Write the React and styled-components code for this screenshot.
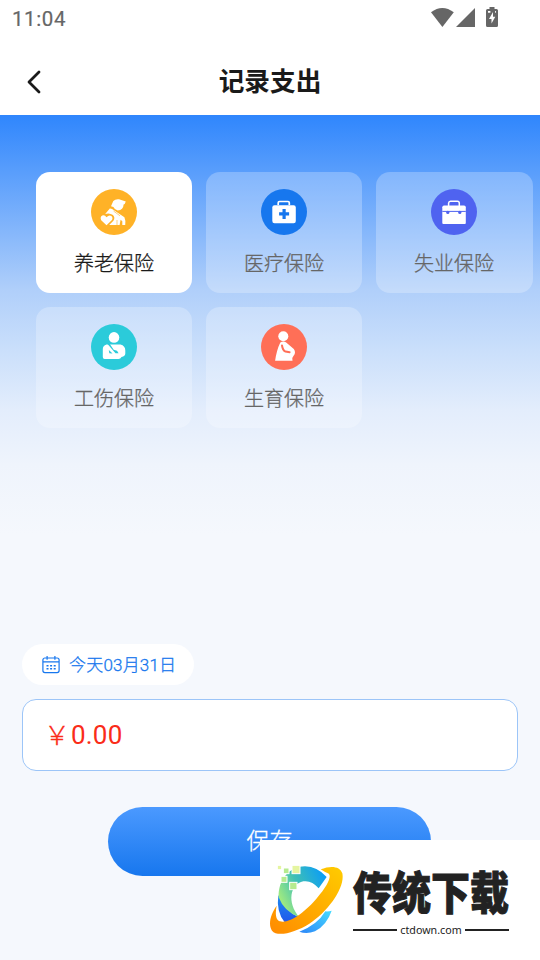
import React, { useState } from 'react';
import styled, { createGlobalStyle, css } from 'styled-components';

const fontStack = "Roboto, 'Noto Sans CJK SC', sans-serif";

const colors = {
	ink: '#1a1a1a',
	grey: '#666666',
	blue: '#1777ee',
	red: '#fa2c19',
	page: '#f5f8fd',
};

// sits between the light and regular cuts
const demiLight = css`
	font-family: 'Noto Sans CJK SC Light', 'Noto Sans CJK SC', sans-serif;
	font-weight: 350;
	-webkit-text-stroke: 0.3px currentColor;
`;

const insurances = [
	{ id: 'pension', label: '养老保险', color: '#ffb227', Icon: PensionIcon },
	{ id: 'medical', label: '医疗保险', color: '#1777ee', Icon: MedicalIcon },
	{ id: 'unemployment', label: '失业保险', color: '#4f63f0', Icon: BriefcaseIcon },
	{ id: 'injury', label: '工伤保险', color: '#2bcbda', Icon: InjuryIcon },
	{ id: 'maternity', label: '生育保险', color: '#ff6f57', Icon: MaternityIcon },
];

export default function App() {
	const [selected, setSelected] = useState('pension');

	return (
		<Screen>
			<GlobalStyle />
			<StatusBar>
				<Clock>11:04</Clock>
				<StatusIcons />
			</StatusBar>
			<Header>
				<BackButton aria-label="返回">
					<svg width="16" height="26" viewBox="0 0 16 26">
						<path
							d="M13 3 L3 13 L13 23"
							fill="none"
							stroke={colors.ink}
							strokeWidth="2.8"
							strokeLinecap="round"
							strokeLinejoin="round"
						/>
					</svg>
				</BackButton>
				<Title>记录支出</Title>
			</Header>
			<Content>
				<InsuranceGrid>
					{insurances.map(({ id, label, color, Icon }) => (
						<Tile key={id} $active={id === selected} onClick={() => setSelected(id)}>
							<svg width="46" height="46" viewBox="0 0 46 46">
								<circle cx="23" cy="23" r="23" fill={color} />
								<Icon color={color} />
							</svg>
							<TileLabel>{label}</TileLabel>
						</Tile>
					))}
				</InsuranceGrid>
				<Form>
					<DatePill>
						<CalendarIcon />
						<DateText>今天03月31日</DateText>
					</DatePill>
					<AmountBox>
						<Yen>￥</Yen>0.00
					</AmountBox>
					<SaveButton>保存</SaveButton>
				</Form>
			</Content>
			<Watermark>
				<LogoMark />
				<Brand>
					<BrandName>传统下载</BrandName>
					<BrandSite>ctdown.com</BrandSite>
				</Brand>
			</Watermark>
		</Screen>
	);
}

function StatusIcons() {
	return (
		<svg width="68" height="22" viewBox="431 6 68 22" fill="#666666">
			<path d="M431 12.3 Q442.3 3.8 453.8 12.3 L442.4 27 Z" />
			<path d="M475 8 V27 H456 Z" />
			<path d="M489.5 7 h5 v2 h2 q1.5 0 1.5 1.5 v15 q0 1.5 -1.5 1.5 h-9 q-1.5 0 -1.5 -1.5 v-15 q0 -1.5 1.5 -1.5 h2 Z" />
			<path d="M493 12 L489 19 H491.5 V23.6 L495.3 16.8 H493 Z" fill="#fff" />
			<path d="M488 11 h2.4 v1.8 H488 Z M495 11 h0.9 v1.8 h-0.9 Z" fill="#fff" />
		</svg>
	);
}

function PensionIcon({ color }) {
	return (
		<g fill="#fff">
			<path d="M20 17.3 L22.3 12 Q24.5 9.8 28 10.3 L34.8 12.4 Q34 15 32.6 15.6 Q32.4 21.3 26.7 21.4 Q23.7 21 22.4 18 Z" />
			<path d="M14.2 25 L18.8 19.4 Q21 19.2 22.6 21 L33.4 28.2 Q34.8 31 34.2 36 H31.3 V32.2 L29.6 30.8 L28.6 36 H18.2 L22.4 31.8 Q24.5 28.8 22 26 Q18.5 23.6 14.2 25 Z" />
			<path d="M15.5 36.2 L10.2 31.3 Q8.7 28 11.3 26.6 Q13.7 25.6 15.5 28.2 Q18 25.6 20.4 27 Q22.4 29 20.7 31.3 Z" />
			<path d="M22.5 22 L29 26.8 M26 31 V36" stroke={color} strokeWidth="0.6" />
		</g>
	);
}

function MedicalIcon({ color }) {
	return (
		<g>
			<path
				d="M17.2 16 V13.8 Q17.2 12.5 18.5 12.5 H27 Q28.3 12.5 28.3 13.8 V16"
				fill="none"
				stroke="#fff"
				strokeWidth="1.7"
			/>
			<rect x="11.3" y="16.3" width="23.5" height="17.9" rx="2.2" fill="#fff" />
			<path d="M23.1 19.9 V29.9 M18.1 24.9 H28.1" stroke={color} strokeWidth="3.2" />
		</g>
	);
}

function BriefcaseIcon({ color }) {
	return (
		<g>
			<path
				d="M17.6 17 V14.2 Q17.8 12.3 19.5 12.3 H26.5 Q28.2 12.3 28.3 14.2 V17"
				fill="none"
				stroke="#fff"
				strokeWidth="1.5"
			/>
			<path d="M13 16.4 H33 Q34.8 16.4 34.8 18.2 V34 Q34.8 35 33.8 35 H12.3 Q11.3 35 11.3 34 V18.2 Q11.3 16.4 13 16.4 Z" fill="#fff" />
			<path d="M11.3 22.4 H34.8" stroke={color} strokeWidth="1" />
			<circle cx="16.8" cy="23.4" r="1.6" fill={color} />
			<circle cx="28.8" cy="23.4" r="1.6" fill={color} />
		</g>
	);
}

function InjuryIcon({ color }) {
	return (
		<g>
			<circle cx="23" cy="13.4" r="5.3" fill="#fff" />
			<path
				d="M15.5 20.5 H29.5 Q34.3 21.8 34.3 26.5 V29.5 Q34.3 32.3 30.5 33 Q29.5 35 27.5 35 H13.7 Q11.8 35 11.8 33 V25 Q11.8 21.6 15.5 20.5 Z"
				fill="#fff"
			/>
			<path d="M16.5 20 L24.5 29.3 H27.6 L26 26.8 Q24.2 26 22.7 25.7 L18.8 20 Z" fill={color} />
			<path d="M17.8 26 L21.5 29.5 L18.3 29.2 Z" fill={color} />
		</g>
	);
}

function MaternityIcon({ color }) {
	return (
		<g>
			<circle cx="22.3" cy="12.3" r="5" fill="#fff" />
			<path
				d="M19.3 18.4 Q22.5 16.7 25.2 18.4 L32.8 25 Q35.3 28.8 32.6 31.8 Q30.5 33.8 31.5 36.8 H14.1 Q15.6 26 19.3 18.4 Z"
				fill="#fff"
			/>
			<path
				d="M21 21.5 Q21.8 26.7 24.5 27.6 L28.6 28.2"
				fill="none"
				stroke={color}
				strokeWidth="2"
				strokeLinecap="round"
			/>
		</g>
	);
}

function CalendarIcon() {
	return (
		<svg width="18" height="18" viewBox="0 0 18 18" fill="none" stroke={colors.blue} strokeWidth="1.2">
			<rect x="0.9" y="2" width="16.2" height="14.6" rx="2" />
			<path d="M1 5.9 H17 M5.1 0 V3.7 M12.9 0 V3.7" />
			<path d="M4.5 9.7 H13.7 M4.5 12.7 H13.7" strokeWidth="1.6" strokeDasharray="2 1.6" />
		</svg>
	);
}

function LogoMark() {
	return (
		<svg width="76" height="70" viewBox="27 75 228 210">
			<defs>
				<linearGradient id="arc" x1="0" y1="0.7" x2="1" y2="0.2">
					<stop offset="0.05" stopColor="#a0ea80" />
					<stop offset="0.45" stopColor="#3fc0b4" />
					<stop offset="1" stopColor="#0a9cf8" />
				</linearGradient>
				<linearGradient id="ring" x1="0" y1="1" x2="1" y2="0">
					<stop offset="0" stopColor="#ff8a00" />
					<stop offset="1" stopColor="#ffcc00" />
				</linearGradient>
				<linearGradient id="tail" x1="0" y1="1" x2="1" y2="0">
					<stop offset="0" stopColor="#2d86f8" />
					<stop offset="1" stopColor="#45dcff" />
				</linearGradient>
				<linearGradient id="deep" x1="0" y1="0" x2="0" y2="1">
					<stop offset="0" stopColor="#1c8cf0" />
					<stop offset="1" stopColor="#2257ea" />
				</linearGradient>
			</defs>
			<path d="M55 165 Q48 215 74 247 Q98 248 120 233 Q76 216 55 165 Z" fill="url(#deep)" />
			<path
				d="M56 172 C54 120 88 79 135 79 Q172 80 200 111 L176 145 Q155 120 130 124 C90 132 80 188 118 232 Q72 215 56 172 Z"
				fill="url(#arc)"
			/>
			<path d="M118 275 Q172 255 196 214 Q206 215 215 212 Q201 254 165 274 Q140 283 118 275 Z" fill="url(#tail)" />
			<path
				d="M182 88 C212 76 240 78 247 100 C256 142 204 215 148 251 C105 278 52 292 36 272 C23 252 33 221 50 197 C45 220 47 240 60 244 C88 252 138 214 171 174 C202 139 218 106 204 100 Q195 97 182 88 Z"
				fill="url(#ring)"
			/>
			<g stroke="#fff" strokeWidth="3">
				<rect x="52" y="76" width="13" height="13" fill="#e5f5a0" />
				<rect x="70" y="84" width="17" height="17" fill="#b6eb8f" />
				<rect x="96" y="76" width="24" height="25" fill="#e5f5a0" />
				<rect x="63" y="109" width="18" height="18" fill="#b6eb8f" />
				<rect x="89" y="127" width="22" height="22" fill="#b6eb8f" />
			</g>
		</svg>
	);
}

const GlobalStyle = createGlobalStyle`
	* {
		box-sizing: border-box;
	}
	body {
		margin: 0;
		font-family: ${fontStack};
	}
	button {
		border: none;
		padding: 0;
		font-family: inherit;
		cursor: pointer;
	}
`;

const Screen = styled.div`
	position: relative;
	display: flex;
	flex-direction: column;
	width: 540px;
	height: 960px;
	overflow: hidden;
	background: #fff;
`;

const StatusBar = styled.div`
	display: flex;
	justify-content: space-between;
	align-items: flex-start;
	height: 48px;
	padding: 6px 41px 0 12px;
`;

const Clock = styled.span`
	color: ${colors.grey};
	font-size: 20.5px;
	line-height: 26px;
	letter-spacing: 0.6px;
	-webkit-text-stroke: 0.2px ${colors.grey};
`;

const Header = styled.header`
	display: grid;
	grid-template-columns: 68px 1fr 68px;
	align-items: center;
	height: 67px;
`;

const BackButton = styled.button`
	display: flex;
	justify-content: center;
	background: none;
`;

const Title = styled.h1`
	margin: 0;
	color: ${colors.ink};
	font-size: 25.7px;
	font-weight: 700;
	line-height: 36px;
	text-align: center;
`;

const Content = styled.main`
	display: flex;
	flex: 1;
	flex-direction: column;
	justify-content: space-between;
	padding: 57px 7px 84px 22px;
	background: linear-gradient(
			#2f86fd 0,
			#b0cffa 175px,
			#cadffb 235px,
			#e3edfc 295px,
			#eff4fc 350px,
			${colors.page} 420px
		)
		${colors.page};
`;

const InsuranceGrid = styled.div`
	display: grid;
	grid-template-columns: 156px 156px 157px;
	grid-auto-rows: 121px;
	gap: 14px;
	padding-left: 14px;
`;

const Tile = styled.button`
	display: flex;
	flex-direction: column;
	align-items: flex-start;
	padding: 17px 0 0 38px;
	border-radius: 14px;
	color: ${(props) => (props.$active ? colors.ink : colors.grey)};
	background: ${(props) => (props.$active ? '#fff' : 'rgba(255, 255, 255, 0.25)')};
	svg {
		margin-left: 17px;
	}
`;

const TileLabel = styled.span`
	${demiLight}
	margin-top: 13px;
	font-size: 20px;
	line-height: 30px;
`;

const Form = styled.div`
	display: flex;
	flex-direction: column;
	align-items: flex-start;
	padding-right: 15px;
`;

const DatePill = styled.div`
	display: flex;
	align-items: center;
	gap: 9px;
	width: 172px;
	height: 41px;
	padding-left: 20px;
	border-radius: 21px;
	background: #fff;
`;

const DateText = styled.span`
	${demiLight}
	padding-bottom: 3px;
	color: ${colors.blue};
	font-family: Roboto, 'Noto Sans CJK SC Light', 'Noto Sans CJK SC', sans-serif;
	font-size: 17px;
	letter-spacing: 0.2px;
	white-space: nowrap;
`;

const AmountBox = styled.div`
	display: flex;
	align-items: center;
	width: 100%;
	height: 72px;
	margin-top: 14px;
	padding-left: 21px;
	border: 1px solid #9cc5f8;
	border-radius: 14px;
	color: ${colors.red};
	background: #fff;
	font-size: 26px;
	letter-spacing: 0.2px;
`;

const Yen = styled.span`
	${demiLight}
	width: 27px;
	padding-bottom: 3px;
	line-height: 36px;
`;

const SaveButton = styled.button`
	${demiLight}
	align-self: center;
	width: 323px;
	height: 69px;
	margin: 36px 1px 0 0;
	padding-bottom: 5px;
	border-radius: 35px;
	color: #fff;
	background: linear-gradient(#4b99ff, #1777ee);
	font-size: 23px;
`;

const Watermark = styled.aside`
	position: absolute;
	right: 0;
	bottom: 0;
	display: flex;
	width: 280px;
	height: 120px;
	padding: 25px 0 0 9px;
	background: #fff;
`;

const Brand = styled.div`
	display: flex;
	flex-direction: column;
	width: 156px;
	margin-left: 8px;
	color: #222;
`;

const BrandName = styled.div`
	margin-top: -3px;
	font-family: 'Noto Sans CJK SC', sans-serif;
	font-size: 39px;
	font-weight: 900;
	line-height: 56px;
	white-space: nowrap;
	-webkit-text-stroke: 0.8px #222;
	transform: scaleY(1.16);
`;

const BrandSite = styled.div`
	display: flex;
	align-items: center;
	gap: 3px;
	margin-top: 2px;
	font-family: 'Noto Sans', sans-serif;
	font-size: 10.7px;
	font-weight: 400;
	line-height: 20px;
	&::before,
	&::after {
		content: '';
		flex: 1;
		height: 2px;
		background: #222;
	}
`;
